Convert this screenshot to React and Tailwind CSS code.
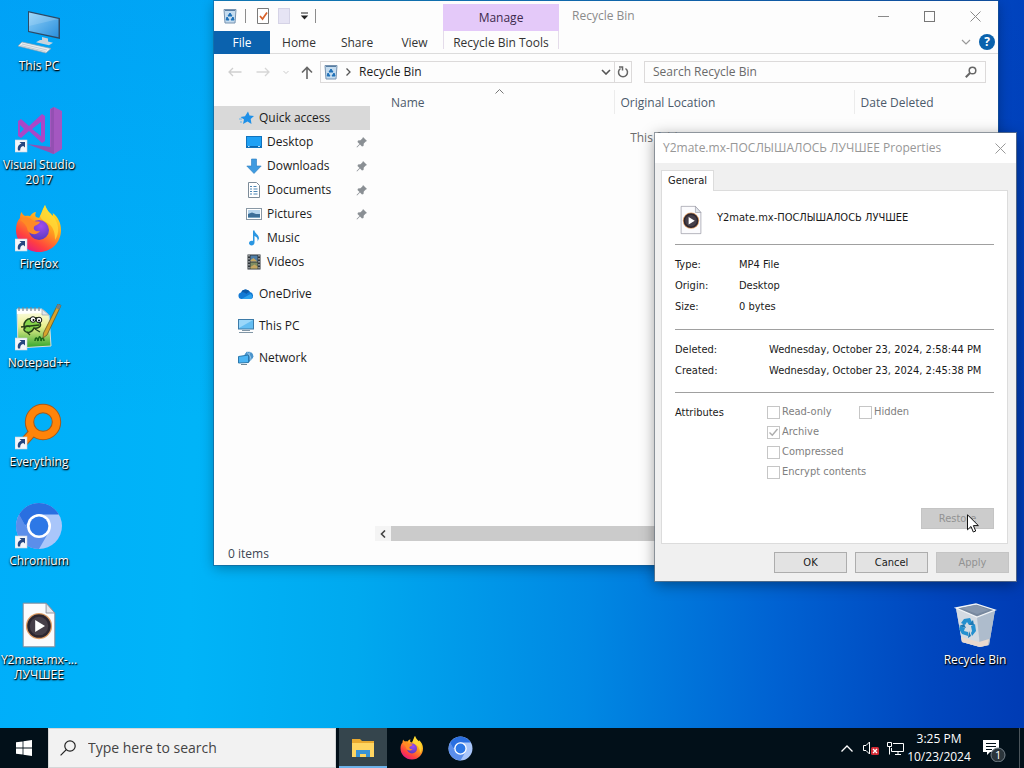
import { useId, useState } from 'react'
import clsx from 'clsx'

const UI = "font-['Open_Sans','Noto_Sans',sans-serif]"
const TAHOMA = "font-['DejaVu_Sans_Condensed','DejaVu_Sans',sans-serif]"

/* ---------- icons ---------- */

function ShortcutArrow() {
  return (
    <>
      <rect x="0" y="34" width="12" height="12" fill="#f4f6fa" stroke="#c9d3e0" strokeWidth=".6" />
      <path d="M3 44.500c-.8-4 .8-6 3.500-6.700L4.500 36H10v5.600L8.300 39.900C6 40.500 5 42 5.200 44.500z" fill="#26467f" />
    </>
  )
}

function ThisPcIcon() {
  return (
    <svg width="48" height="48" viewBox="0 0 48 48">
      <defs>
        <linearGradient id="pcScreen" x1="0" y1="0" x2="1" y2="1">
          <stop offset="0" stopColor="#8fd0f8" />
          <stop offset="1" stopColor="#2a8fdc" />
        </linearGradient>
      </defs>
      <path d="M13 4l32 7v21l-32-7z" fill="#2d4a66" />
      <path d="M14 5.500l29.500 6.500v18.300L14 24z" fill="url(#pcScreen)" />
      <path d="M14 5.500l29.500 6.500L14 19z" fill="#fff" opacity=".15" />
      <path d="M27 30l6 1.500v3l5 1.300-4 2.500-13-3 4-2.400 2 .2z" fill="#c8d4dd" />
      <path d="M7 35l29 6.500-5 4.500L3 39z" fill="#e9eef1" stroke="#8fa3b2" strokeWidth=".7" />
      <path d="M7 37l25 6M5.500 38.500l25 6" stroke="#a9b6c0" strokeWidth=".6" />
    </svg>
  )
}

function VisualStudioIcon() {
  return (
    <svg width="48" height="48" viewBox="0 0 48 48">
      <path d="M35 3l4-2 8 4v38l-8 5-4-1z" fill="#a457c0" />
      <path d="M12 38l24 3V3l3-2v47z" fill="#9350b2" />
      <path fillRule="evenodd" d="M3 15l3-2 8 7 13-12 3 2v25l-3 2-13-12-8 7-3-2zm2 4v8l4-4zm12 4l9 7V16z" fill="#a947c8" />
      <ShortcutArrow />
    </svg>
  )
}

function FirefoxIcon({ size = 48, shortcut }) {
  return (
    <svg width={size} height={size} viewBox="0 0 48 48">
      <defs>
        <linearGradient id="foxBody" x1=".8" y1=".1" x2=".25" y2="1">
          <stop offset="0" stopColor="#ffe226" />
          <stop offset=".4" stopColor="#ff9a1f" />
          <stop offset=".75" stopColor="#ff4040" />
          <stop offset="1" stopColor="#e31587" />
        </linearGradient>
        <radialGradient id="foxGlobe" cx=".6" cy=".3" r=".8">
          <stop offset="0" stopColor="#a04bf0" />
          <stop offset="1" stopColor="#5038b8" />
        </radialGradient>
      </defs>
      <path
        d="M30 0c2 6 5 8 8 11 0-1 0-2-.4-3C43 12 46 18 46 25c0 12-9 22-22 22S1 37 1 25c0-5 1-9 4-12 0-2 .4-4 1.400-6 1 2 2 3 3.600 4 2-.4 3-.4 5 .2C17 8 19 7 21 7c-1 2-1 4 0 5l3 1c2-3 3-8 6-13z"
        fill="url(#foxBody)"
      />
      <path d="M30 0c2 6 5 8 8 11 6 7 7 17 2 24 0-6-1-12-6-16-4-3-8-4-9-8 2-3 3-7 5-11z" fill="#ffdc3a" opacity=".75" />
      <circle cx="24" cy="25" r="10" fill="url(#foxGlobe)" />
      <path d="M5 15c4-4 9-3 12 0 3 2 6 1 8 2-1 3-5 3-6 5-1 3 2 5 6 4-3 5-12 4-13-3-1-3-3-5-7-8z" fill="#ff8a25" />
      {shortcut && <ShortcutArrow />}
    </svg>
  )
}

function NotepadIcon() {
  return (
    <svg width="48" height="48" viewBox="0 0 48 48">
      <defs>
        <linearGradient id="npGrass" x1="0" y1="0" x2="0" y2="1">
          <stop offset="0" stopColor="#fffef0" />
          <stop offset=".45" stopColor="#e8ef8c" />
          <stop offset="1" stopColor="#2fa52a" />
        </linearGradient>
      </defs>
      <path d="M2 5h25l7 6 2 31-33 2z" fill="url(#npGrass)" stroke="#d9dee0" strokeWidth="1" />
      <path d="M2 6h25l3 3-28 1z" fill="#fff" />
      <path d="M4 3v4M8 3v4M12 3v4M16 3v4M20 3v4M24 3v4" stroke="#7d8790" strokeWidth="1.200" />
      <path d="M27 5v6h7z" fill="#dfe6ea" stroke="#8a949c" strokeWidth=".6" />
      <path d="M10 25c-3-6 2-12 8-10 4-3 8 0 7 4 2 4-3 6-6 5-2 5-8 6-10 2 0-4 4-5 6-3" fill="#86d34b" stroke="#234018" strokeWidth="1.500" />
      <circle cx="18" cy="15.500" r="2.800" fill="#fff" stroke="#111" />
      <circle cx="24" cy="16" r="2.800" fill="#fff" stroke="#111" />
      <circle cx="18.500" cy="16" r="1" />
      <circle cx="24" cy="16.500" r="1" />
      <path d="M6 23l18-2M12 28l3 3M20 25l5 3" stroke="#234018" strokeWidth="1.300" />
      <path d="M20 37c0-3 2-5 3 0 1-6 3-5 3 0 1-4 3-3 3 0" fill="none" stroke="#176317" strokeWidth="1.500" />
      <path d="M43 0l3 1.500L32 31l-4 3 .5-5z" fill="#d8a32c" stroke="#6b5926" strokeWidth=".8" />
      <path d="M43 0l3 1.500-2 4-3-1.500z" fill="#71808a" />
      <ShortcutArrow />
    </svg>
  )
}

function EverythingIcon() {
  return (
    <svg width="48" height="48" viewBox="0 0 48 48">
      <path d="M17 30L7 41" stroke="#a35a1d" strokeWidth="9" />
      <circle cx="28" cy="19" r="13.500" fill="none" stroke="#a35a1d" strokeWidth="9.400" />
      <path d="M18 29L7 41" stroke="#ff8409" strokeWidth="7" />
      <circle cx="28" cy="19" r="13.500" fill="none" stroke="#ff8409" strokeWidth="7.400" />
      <ShortcutArrow />
    </svg>
  )
}

function ChromiumIcon({ size = 48, shortcut }) {
  return (
    <svg width={size} height={size} viewBox="0 0 48 48">
      <circle cx="24" cy="24" r="23" fill="#a9c6fa" />
      <path d="M4.100 12.500A23 23 0 0 0 24 47l10-17.200L14 30z" fill="#5b8eea" />
      <path d="M4.100 12.500L14 30l10-17.500z" fill="#5b8eea" />
      <path d="M4.100 12.500A23 23 0 0 1 43.900 12.500H24a11.500 11.500 0 0 0-10.500 8L10 23z" fill="#2a6fe0" />
      <circle cx="24" cy="24" r="12" fill="#fff" />
      <circle cx="24" cy="24" r="9.400" fill="#2d78e6" />
      {shortcut && <ShortcutArrow />}
    </svg>
  )
}

function VideoFileIcon({ width = 48, height = 48 }) {
  return (
    <svg width={width} height={height} viewBox="8 2 33 44">
      <path d="M10 4h21l8 9v31H10z" fill="#fbfbfd" stroke="#8a8a96" strokeWidth=".9" />
      <path d="M31 4v9h8z" fill="#e4e8ee" stroke="#8b8b97" strokeWidth=".8" />
      <circle cx="24.500" cy="25" r="12" fill="#dc9c64" />
      <circle cx="24.500" cy="25" r="10.800" fill="#2c2630" />
      <circle cx="24.500" cy="25" r="8.500" fill="#463f49" />
      <path d="M21 19.500v11l9-5.500z" fill="#fff" />
    </svg>
  )
}

function RecycleBinIcon() {
  return (
    <svg width="48" height="48" viewBox="0 0 48 48">
      <path d="M5 7l20-4 19 6-6 35-9 2-18-5z" fill="#ccd5df" />
      <path d="M5 7l21 9 3 30-18-5z" fill="#d3dae2" />
      <path d="M26 16l18-7-6 35-9 2z" fill="#aebccc" />
      <path d="M5 7l20-4 19 6-18 7z" fill="#77889e" stroke="#f1f4f7" strokeWidth="1.300" />
      <path d="M10 7l15-3 13 5-12 4z" fill="#8797ad" />
      <path d="M10 36l18 5 10-3-1 6-8 2-18-5z" fill="#ead9cd" />
      <g fill="#2490cf">
        <path d="M13 18l6-1 3 6-4 1-2-3-2 3-4-2z" />
        <path d="M20 25l4-2 1 7-4 5-1-3 1-2z" />
        <path d="M9 25l5 2-1 3 4 1v4l-6-2-3-5z" />
      </g>
      <path d="M18 30l-1 7 3-2zM22 19l1 5-5 0zM8 25l5-2 2 4z" fill="#1c78b4" />
    </svg>
  )
}

function SmallBin() {
  return (
    <svg width="14" height="16" viewBox="0 0 14 16" className="shrink-0">
      <path d="M1 1.500h12L12 15H2z" fill="#c5dcef" stroke="#7793b0" />
      <path d="M2 2.500h10" stroke="#577da3" />
      <path d="M7 5l2 3H5zM4 9l2 3H3.200zM10 9l1 3H8z" fill="#1d70b8" stroke="#1d70b8" />
    </svg>
  )
}

function Pin() {
  return (
    <svg width="12" height="12" viewBox="0 0 12 12" fill="#8a8f94">
      <path d="M7 1l4 4-1.200.5-2 2L7.500 10 6 10.500 4 8.500 1 11.500.5 11l3-3L1.500 6 2 4.500l2.500-.3 2-2z" />
    </svg>
  )
}

const navIcons = {
  star: (
    <svg width="16" height="16" viewBox="0 0 16 16">
      <path d="M9 1.500l1.500 4 4.500.5-3.300 3 .8 5L8.500 11.500 4 14l1-4.500L1.500 7l4.500-.7z" fill="#1e90e8" />
      <path d="M0 9h3M1 12h2" stroke="#63b5f1" strokeWidth="1.200" />
    </svg>
  ),
  desktop: (
    <svg width="16" height="16" viewBox="0 0 16 16">
      <rect x=".5" y="2.500" width="15" height="11" fill="#1fa1f5" stroke="#1173bd" />
      <path d="M1 12.500h14" stroke="#0c66ad" />
      <path d="M2 12.500h1.500M12 12.500h2" stroke="#bfe3fa" />
    </svg>
  ),
  downloads: (
    <svg width="16" height="16" viewBox="0 0 16 16">
      <path d="M5.500 1h5v7h4.700L8 15.500.8 8h4.700z" fill="#3f9be0" stroke="#2a7cbf" strokeWidth=".6" />
    </svg>
  ),
  documents: (
    <svg width="16" height="16" viewBox="0 0 16 16">
      <path d="M2.500.5h8l3 3v12h-11z" fill="#fff" stroke="#7d8c99" />
      <path d="M4 4.500h2M7.500 4.500h3M4 7h2M7.500 7h4M4 9.500h2M7.500 9.500h4M4 12h2M7.500 12h4" stroke="#4d86b5" />
    </svg>
  ),
  pictures: (
    <svg width="16" height="16" viewBox="0 0 16 16">
      <rect x=".5" y="2.500" width="15" height="11" fill="#fff" stroke="#8998a5" />
      <rect x="2" y="4" width="12" height="8" fill="#b7d6ee" />
      <path d="M2 8l4-1.500 4 1.500h4v4H2z" fill="#3d6f98" />
      <path d="M2 11h12v1H2z" fill="#79a6c4" />
    </svg>
  ),
  music: (
    <svg width="16" height="16" viewBox="0 0 16 16">
      <path d="M7 .5h1.500c.2 3 4.500 4 4.500 8l-1.500 3c.5-3-.5-4.500-3-5.500v6.500c0 4-6 3.500-5.500.5.300-2 2.500-2.800 4-2z" fill="#2b97e2" />
    </svg>
  ),
  videos: (
    <svg width="16" height="16" viewBox="0 0 16 16">
      <rect x="1.500" y=".5" width="13" height="15" fill="#30363b" />
      <rect x="4.500" y="1.500" width="7" height="6" fill="#4f7ea7" />
      <rect x="4.500" y="8.500" width="7" height="6" fill="#7f8d62" />
      <path d="M4.500 6l3-2 4 3.500h-7zM4.500 13l4-2.500 3 2v2h-7z" fill="#c5a660" />
      <path d="M3 1v15M13 1v15" stroke="#dfe4e7" strokeDasharray="1.500 1.500" />
    </svg>
  ),
  onedrive: (
    <svg width="16" height="16" viewBox="0 0 16 16">
      <path d="M3.500 13A3.300 3.300 0 0 1 3 6.500 5 5 0 0 1 12 6a3.700 3.700 0 0 1 1 7z" fill="#1279d4" />
      <path d="M3 6.500A5 5 0 0 1 12 6c-2 0-3 1-3.500 2C7 6.500 5 6 3 6.500z" fill="#0c5aa8" />
      <path d="M3.500 13l9-5A3 3 0 0 1 13 13z" fill="#2fa3ee" />
    </svg>
  ),
  thispc: (
    <svg width="16" height="16" viewBox="0 0 16 16">
      <rect x=".5" y="1.500" width="15" height="9.500" fill="#63bdf2" stroke="#3d7ba8" />
      <path d="M1 2h14L1 10z" fill="#9ad7fa" />
      <path d="M4 12.500h8M1 14.500h14" stroke="#8196a6" />
    </svg>
  ),
  network: (
    <svg width="16" height="16" viewBox="0 0 16 16">
      <path d="M9 1.500l6.500 5-5 6.500V5L6 5.500z" fill="#2f7fbd" />
      <circle cx="11" cy="6" r="4.300" fill="#4b94cc" />
      <path d="M9 2.500c3 2 4 5 4 8M12.500 2c-2 2-3 5-3 9" stroke="#bcdcf2" fill="none" strokeWidth=".7" />
      <path d="M.5 6.500l10-1.500v7.500l-10 .5z" fill="#4bb4f3" stroke="#2b78ad" />
      <path d="M3 14.500h6" stroke="#6f8796" />
    </svg>
  ),
}

/* ---------- desktop ---------- */

function DesktopItem({ icon, label, className }) {
  return (
    <button
      className={clsx(
        'flex flex-col items-center text-center text-xs/[15px] text-white pt-[7px]',
        '[text-shadow:0_1px_2px_#000,1px_1px_1px_#000]',
        className
      )}
    >
      {icon}
      <span className="mt-[3px] whitespace-pre">{label}</span>
    </button>
  )
}

/* ---------- explorer window ---------- */

function ExplorerTitle() {
  return (
    <div className="flex h-[30px] shrink-0 items-center pl-[9px]">
      <SmallBin />
      <span className="ml-2 h-3.5 w-px bg-[#8c8c8c]" />
      <button aria-label="Properties" className="ml-2.5">
        <svg width="14" height="16" viewBox="0 0 14 16">
          <path d="M1.500.5h11v15h-11z" fill="#fff" stroke="#7a7a7a" />
          <path d="M4 8l2.500 3L11 4.500" fill="none" stroke="#d8622b" strokeWidth="1.700" />
        </svg>
      </button>
      <button aria-label="New folder" className="ml-2 h-4 w-3 border border-[#d5d3e6] bg-[#e6e4f4]" />
      <button aria-label="Customize toolbar" className="ml-2.5">
        <svg width="9" height="8" viewBox="0 0 9 8">
          <path d="M1 1h7" stroke="#222" />
          <path d="M.8 3.500h7.400L4.500 7.500z" fill="#222" />
        </svg>
      </button>
      <span className="ml-1.5 h-3.5 w-px bg-[#8c8c8c]" />
      <div className="ml-[127px] flex h-[27px] w-[116px] items-center justify-center self-end bg-[#e4c9f9] text-xs text-[#3d2b4d]">
        Manage
      </div>
      <h1 className="ml-[13px] flex-1 text-xs text-[#8b8b8b]">Recycle Bin</h1>
      <div className="flex text-[#8a8a8a]">
        <button aria-label="Minimize" className="grid h-7 w-[46px] place-items-center">
          <svg width="11" height="11" viewBox="0 0 11 11" stroke="currentColor"><path d="M0 5.500h11" /></svg>
        </button>
        <button aria-label="Maximize" className="grid h-7 w-[46px] place-items-center">
          <svg width="11" height="11" viewBox="0 0 11 11" fill="none" stroke="#777"><rect x=".5" y=".5" width="10" height="10" /></svg>
        </button>
        <button aria-label="Close" className="grid h-7 w-[46px] place-items-center">
          <svg width="11" height="11" viewBox="0 0 11 11" stroke="currentColor"><path d="M.5.5l10 10M10.500.5l-10 10" /></svg>
        </button>
      </div>
    </div>
  )
}

function RibbonTabs() {
  return (
    <div className="flex h-[23px] shrink-0 items-center border-b border-[#dcdcdc] text-xs text-[#333]">
      <button className="h-[23px] w-14 bg-[#0b62ae] pt-0.5 text-white">File</button>
      <button className="w-[58px] pt-0.5">Home</button>
      <button className="w-[58px] pt-0.5">Share</button>
      <button className="w-[57px] pt-0.5">View</button>
      <button className="h-[18px] w-[116px] self-start whitespace-nowrap border-x border-[#e4dcea] pt-1">
        Recycle Bin Tools
      </button>
      <div className="ml-auto flex items-center gap-2 pr-[3px]">
        <svg width="10" height="6" viewBox="0 0 10 6" fill="none" stroke="#999" strokeWidth="1.200"><path d="M1 1l4 4 4-4" /></svg>
        <button aria-label="Help" className="grid size-4 place-items-center rounded-full bg-[#0a62ad] text-xs/[16px] font-bold text-white">?</button>
      </div>
    </div>
  )
}

function AddressRow() {
  return (
    <div className="flex h-9 shrink-0 items-center pr-3 pl-3.5 text-[#666]">
      <button aria-label="Back">
        <svg width="14" height="10" viewBox="0 0 14 10" fill="none" stroke="#cfcfcf" strokeWidth="1.300"><path d="M13.500 5H1M5 1L1 5l4 4" /></svg>
      </button>
      <button aria-label="Forward" className="ml-3.5">
        <svg width="14" height="10" viewBox="0 0 14 10" fill="none" stroke="#d6d6d6" strokeWidth="1.300"><path d="M.5 5H13M9 1l4 4-4 4" /></svg>
      </button>
      <svg className="ml-3" width="8" height="5" viewBox="0 0 8 5" fill="none" stroke="#ccc"><path d="M1.500 1L4 3.500 6.500 1" /></svg>
      <button aria-label="Up" className="ml-[11px]">
        <svg width="12" height="13" viewBox="0 0 12 13" fill="none" stroke="#666" strokeWidth="1.600"><path d="M6 13V1.500M1 6.500l5-5 5 5" /></svg>
      </button>
      <div className="ml-[7px] flex h-[22px] flex-1 items-center border border-[#dcdada] pl-[3px]">
        <SmallBin />
        <svg className="ml-2" width="5" height="8" viewBox="0 0 5 8" fill="none" stroke="#555" strokeWidth="1.300"><path d="M.5.5L4 4 .5 7.500" /></svg>
        <span className="ml-2 flex-1 text-xs text-[#1c1c1c]">Recycle Bin</span>
        <button aria-label="Recent locations" className="grid h-5 w-[18px] place-items-center border-r border-[#dcdada]">
          <svg width="10" height="6" viewBox="0 0 10 6" fill="none" stroke="#555" strokeWidth="1.600"><path d="M1 1l4 4 4-4" /></svg>
        </button>
        <button aria-label="Refresh" className="grid w-4 place-items-center">
          <svg width="12" height="12" viewBox="0 0 12 12" fill="none" stroke="#666" strokeWidth="1.500">
            <path d="M8.500 2.500A4.500 4.500 0 1 1 3.500 2.500" />
            <path d="M2 1h3.500v3.500" />
          </svg>
        </button>
      </div>
      <label className="ml-3 flex h-[22px] w-[342px] items-center border border-[#dcdada] pr-2 pl-2">
        <input
          aria-label="Search Recycle Bin"
          placeholder="Search Recycle Bin"
          className="min-w-0 flex-1 text-xs outline-none placeholder:text-[#6a6a6a]"
        />
        <svg width="12" height="12" viewBox="0 0 12 12" fill="none" stroke="#666" strokeWidth="1.500">
          <circle cx="7.500" cy="4.500" r="3.300" />
          <path d="M5 7L.8 11.200" strokeWidth="2" />
        </svg>
      </label>
    </div>
  )
}

const quickLinks = [
  { label: 'Desktop', icon: 'desktop', pinned: true },
  { label: 'Downloads', icon: 'downloads', pinned: true },
  { label: 'Documents', icon: 'documents', pinned: true },
  { label: 'Pictures', icon: 'pictures', pinned: true },
  { label: 'Music', icon: 'music' },
  { label: 'Videos', icon: 'videos' },
]

function NavPane() {
  return (
    <nav className="w-[161px] shrink-0 pt-4 pr-[5px] text-xs text-[#1b1b1b]">
      <a href="#quick" className="flex h-6 items-center gap-1 bg-[#d9d9d9] pl-[25px]">
        {navIcons.star} Quick access
      </a>
      {quickLinks.map((l) => (
        <a key={l.label} href={'#' + l.icon} className="flex h-6 items-center gap-[5px] pl-8">
          {navIcons[l.icon]}
          <span className="flex-1">{l.label}</span>
          {l.pinned && <span className="pr-0.5"><Pin /></span>}
        </a>
      ))}
      <a href="#onedrive" className="mt-2 flex h-6 items-center gap-[5px] pl-6">{navIcons.onedrive} OneDrive</a>
      <a href="#thispc" className="mt-2 flex h-6 items-center gap-[5px] pl-6">{navIcons.thispc} This PC</a>
      <a href="#network" className="mt-2 flex h-6 items-center gap-[5px] pl-6">{navIcons.network} Network</a>
    </nav>
  )
}

function FileList() {
  return (
    <div className="flex min-w-0 flex-1 flex-col">
      <table className="w-full table-fixed text-xs text-[#4c5a6b]">
        <thead>
          <tr className="h-6 text-left">
            <th className="w-[239px] border-r border-[#ececec] p-0 pl-4 font-normal">
              <div className="relative pt-0.5">
                Name
                <svg className="absolute -top-1 left-[104px]" width="9" height="5" viewBox="0 0 9 5" fill="none" stroke="#777"><path d="M.5 4.500l4-4 4 4" /></svg>
              </div>
            </th>
            <th className="w-60 border-r border-[#ececec] p-0 pt-0.5 pl-1.5 font-normal">Original Location</th>
            <th className="p-0 pt-0.5 pl-1.5 font-normal">Date Deleted</th>
          </tr>
        </thead>
        <tbody>
          <tr>
            <td colSpan={3} className="p-0 pt-4 text-center text-[#6d6d6d]">This folder is empty.</td>
          </tr>
        </tbody>
      </table>
      <div className="mt-auto flex h-[15px] bg-[#f0f0f0]">
        <button aria-label="Scroll left" className="grid w-4 place-items-center bg-[#f4f4f4]">
          <svg width="6" height="8" viewBox="0 0 6 8" fill="none" stroke="#444" strokeWidth="1.600"><path d="M5 .5L1.500 4 5 7.500" /></svg>
        </button>
        <div className="mr-4 flex-1 bg-[#cbcbcb]" />
      </div>
    </div>
  )
}

function Explorer() {
  return (
    <section className="absolute top-px right-[26px] bottom-[203px] left-[214px] flex flex-col bg-[#fdfdfd] shadow-[0_0_0_1px_rgba(30,90,140,0.55),0_3px_12px_rgba(0,0,0,0.3)]">
      <ExplorerTitle />
      <RibbonTabs />
      <AddressRow />
      <div className="flex min-h-0 flex-1">
        <NavPane />
        <FileList />
      </div>
      <footer className="flex h-6 shrink-0 items-center pt-0.5 pl-3.5 text-xs text-[#3c4654]">0 items</footer>
    </section>
  )
}

/* ---------- properties dialog ---------- */

function Attribute({ label, checked = false }) {
  const id = useId()
  return (
    <div className="flex items-center gap-0.5 text-[#808080]">
      <span className="grid">
        <input
          id={id}
          type="checkbox"
          disabled
          defaultChecked={checked}
          className="col-start-1 row-start-1 size-[13px] appearance-none border border-[#c6c6c6] bg-white"
        />
        {checked && (
          <svg className="col-start-1 row-start-1" width="13" height="13" viewBox="0 0 13 13" fill="none" stroke="#adadad" strokeWidth="1.400">
            <path d="M2.500 6.500l2.800 2.800L10.500 3" />
          </svg>
        )}
      </span>
      <label htmlFor={id}>{label}</label>
    </div>
  )
}

function Row({ name, value, wide }) {
  return (
    <div className="flex h-[21px] items-center">
      <dt className={wide ? 'w-[94px]' : 'w-16'}>{name}</dt>
      <dd className="whitespace-nowrap">{value}</dd>
    </div>
  )
}

function DialogButton({ children, disabled }) {
  return (
    <button
      disabled={disabled}
      className={clsx(
        'h-[21px] w-[73px] border',
        disabled ? 'border-[#c4c4c4] bg-[#cccccc] text-[#929292]' : 'border-[#adadad] bg-[#e3e3e3] text-[#1a1a1a]'
      )}
    >
      {children}
    </button>
  )
}

function PropertiesDialog({ onClose }) {
  return (
    <section
      role="dialog"
      className={clsx(
        'absolute top-[133px] right-2 w-[361px] bg-[#f0f0f0] pb-2 text-[11px]/[14px] text-[#1a1a1a]',
        'shadow-[0_0_0_1px_rgba(110,120,130,0.7),0_3px_14px_rgba(0,0,0,0.4)]',
        TAHOMA
      )}
    >
      <header className={clsx('flex h-[30px] items-center justify-between bg-white pr-2.5 pl-2 text-xs text-[#979797]', UI)}>
        <h2>Y2mate.mx-ПОСЛЫШАЛОСЬ ЛУЧШЕЕ Properties</h2>
        <button aria-label="Close" onClick={onClose}>
          <svg width="11" height="11" viewBox="0 0 11 11" stroke="#999"><path d="M.5.5l10 10M10.500.5l-10 10" /></svg>
        </button>
      </header>

      <div className="px-1.5 pt-[7px]">
        <button role="tab" aria-selected="true" className="relative -mb-px block h-[21px] w-[53px] border border-b-0 border-[#dcdcdc] bg-white">
          General
        </button>
        <div className="mr-0.5 border border-[#dcdcdc] bg-white px-[13px] pb-[14px]">
          <div className="flex h-[54px] items-center gap-3.5 border-b border-[#a0a0a0] pt-1 pl-1">
            <VideoFileIcon width={24} height={30} />
            <span className="pb-1">Y2mate.mx-ПОСЛЫШАЛОСЬ ЛУЧШЕЕ</span>
          </div>
          <dl className="border-b border-[#a0a0a0] pt-[9px] pb-3">
            <Row name="Type:" value="MP4 File" />
            <Row name="Origin:" value="Desktop" />
            <Row name="Size:" value="0 bytes" />
          </dl>
          <dl className="border-b border-[#a0a0a0] pt-[9px] pb-[11px]">
            <Row wide name="Deleted:" value="Wednesday, October 23, 2024, 2:58:44 PM" />
            <Row wide name="Created:" value="Wednesday, October 23, 2024, 2:45:38 PM" />
          </dl>
          <fieldset className="flex pt-3">
            <legend className="float-left w-[92px] pt-px">Attributes</legend>
            <div className="flex flex-1 flex-col gap-1.5">
              <div className="flex">
                <div className="w-[92px]"><Attribute label="Read-only" /></div>
                <Attribute label="Hidden" />
              </div>
              <Attribute label="Archive" checked />
              <Attribute label="Compressed" />
              <Attribute label="Encrypt contents" />
            </div>
          </fieldset>
          <div className="flex justify-end pt-[29px]">
            <DialogButton disabled>Restore</DialogButton>
          </div>
        </div>
      </div>
      <div className="flex justify-end gap-2 pt-2 pr-[7px]">
        <DialogButton>OK</DialogButton>
        <DialogButton>Cancel</DialogButton>
        <DialogButton disabled>Apply</DialogButton>
      </div>
    </section>
  )
}

/* ---------- taskbar ---------- */

function Taskbar() {
  return (
    <footer className="flex h-10 shrink-0 items-stretch bg-[#021019] text-white">
      <button aria-label="Start" className="grid w-12 place-items-center">
        <svg width="16" height="16" viewBox="0 0 16 16" fill="#fff">
          <path d="M0 2.300L6.600 1.400v6.200H0zM7.400 1.300L16 0v7.600H7.400zM0 8.400h6.600v6.200L0 13.700zM7.400 8.400H16V16l-8.600-1.300z" />
        </svg>
      </button>
      <label className="flex w-72 items-center gap-3 border border-[#d5d7d8] bg-[#f2f2f2] pl-[11px]">
        <svg width="16" height="16" viewBox="0 0 16 16" fill="none" stroke="#222" strokeWidth="1.200">
          <circle cx="10" cy="6" r="5.200" />
          <path d="M6.300 9.700L.6 15.400" />
        </svg>
        <input aria-label="Type here to search" placeholder="Type here to search" className="min-w-0 flex-1 text-sm outline-none placeholder:text-[#444]" />
      </label>
      <button aria-label="File Explorer" className="ml-[3px] grid w-12 place-items-center border-b-2 border-[#6cb2ea] bg-[#35454d] pt-0.5">
        <svg width="22" height="18" viewBox="0 0 22 18">
          <path d="M0 0h8l2 2h12v16H0z" fill="#e9a92f" />
          <path d="M0 4h22v14H0z" fill="#ffd561" />
          <path d="M4 11h14v7h-4v-3H8v3H4z" fill="#3a93d6" />
        </svg>
      </button>
      <button aria-label="Firefox" className="grid w-[49px] place-items-center"><FirefoxIcon size={24} /></button>
      <button aria-label="Chromium" className="grid w-[49px] place-items-center"><ChromiumIcon size={25} /></button>

      <div className="ml-auto flex items-center">
        <button aria-label="Show hidden icons">
          <svg width="12" height="7" viewBox="0 0 12 7" fill="none" stroke="#fff" strokeWidth="1.300"><path d="M.5 6.500L6 1l5.500 5.500" /></svg>
        </button>
        <button aria-label="Volume muted" className="ml-2.5">
          <svg width="16" height="16" viewBox="0 0 16 16">
            <path d="M.5 5.500H3l3.500-3.500v12L3 10.500H.5z" fill="none" stroke="#fff" />
            <rect x="8" y="7" width="8" height="8" rx="1.500" fill="#d42a35" />
            <path d="M10 9l4 4M14 9l-4 4" stroke="#fff" strokeWidth="1.300" />
          </svg>
        </button>
        <button aria-label="Network" className="ml-2">
          <svg width="17" height="15" viewBox="0 0 17 15" fill="none" stroke="#fff">
            <path d="M6 2.500h10.500v8H4.500V7M8 13.500h6M11 10.500v3" />
            <path d="M.5 1.500h4v4h-4zM2.500 5.500v8" />
          </svg>
        </button>
        <button className="w-[70px] text-center text-xs/[18px]">
          3:25 PM
          <br />
          10/23/2024
        </button>
        <button aria-label="Notifications" className="relative ml-2 grid w-[37px] place-items-start pt-1">
          <svg width="24" height="24" viewBox="0 0 24 24">
            <path d="M1 2h16v12H8l-3 3v-3H1z" fill="#fff" />
            <path d="M4 5.500h10M4 8.500h10M4 11.500h6" stroke="#021019" strokeWidth="1.200" />
            <circle cx="16" cy="17" r="7" fill="#2b353b" stroke="#75818a" />
          </svg>
          <span className="absolute top-[14px] left-[13px] text-[11px]/[14px]">1</span>
        </button>
        <span className="mr-1 h-10 w-px bg-[#4b555b]" />
      </div>
    </footer>
  )
}

export default function App() {
  const [dialogOpen, setDialogOpen] = useState(true)

  return (
    <div
      className={clsx(
        'relative flex min-h-screen flex-col overflow-hidden',
        'bg-[linear-gradient(180deg,rgba(0,90,225,0.15),rgba(0,90,225,0)_55%),linear-gradient(92deg,#00aefa_0%,#00b4f8_20%,#00a9ef_36%,#0088e3_58%,#0062d2_76%,#0046be_91%,#003bb4_100%)]',
        UI
      )}
    >
      <main className="grid flex-1 auto-rows-[99px] grid-cols-[78px_1fr_98px] content-start">
        <DesktopItem className="col-start-1" icon={<ThisPcIcon />} label="This PC" />
        <DesktopItem className="col-start-1" icon={<VisualStudioIcon />} label={'Visual Studio\n2017'} />
        <DesktopItem className="col-start-1" icon={<FirefoxIcon shortcut />} label="Firefox" />
        <DesktopItem className="col-start-1" icon={<NotepadIcon />} label="Notepad++" />
        <DesktopItem className="col-start-1" icon={<EverythingIcon />} label="Everything" />
        <DesktopItem className="col-start-1" icon={<ChromiumIcon shortcut />} label="Chromium" />
        <DesktopItem className="col-start-1" icon={<VideoFileIcon />} label={'Y2mate.mx-...\nЛУЧШЕЕ'} />
        <DesktopItem className="col-start-3 row-start-7" icon={<RecycleBinIcon />} label="Recycle Bin" />
      </main>

      <Explorer />
      {dialogOpen && <PropertiesDialog onClose={() => setDialogOpen(false)} />}
      <Taskbar />

      {/* mouse pointer */}
      <svg className="pointer-events-none absolute top-[514px] left-[967px]" width="12" height="19" viewBox="0 0 12 19">
        <path d="M.5.8v15l3.500-3.300 2.300 5.500 2.400-1-2.300-5.400h5z" fill="#fff" stroke="#111" />
      </svg>
    </div>
  )
}
